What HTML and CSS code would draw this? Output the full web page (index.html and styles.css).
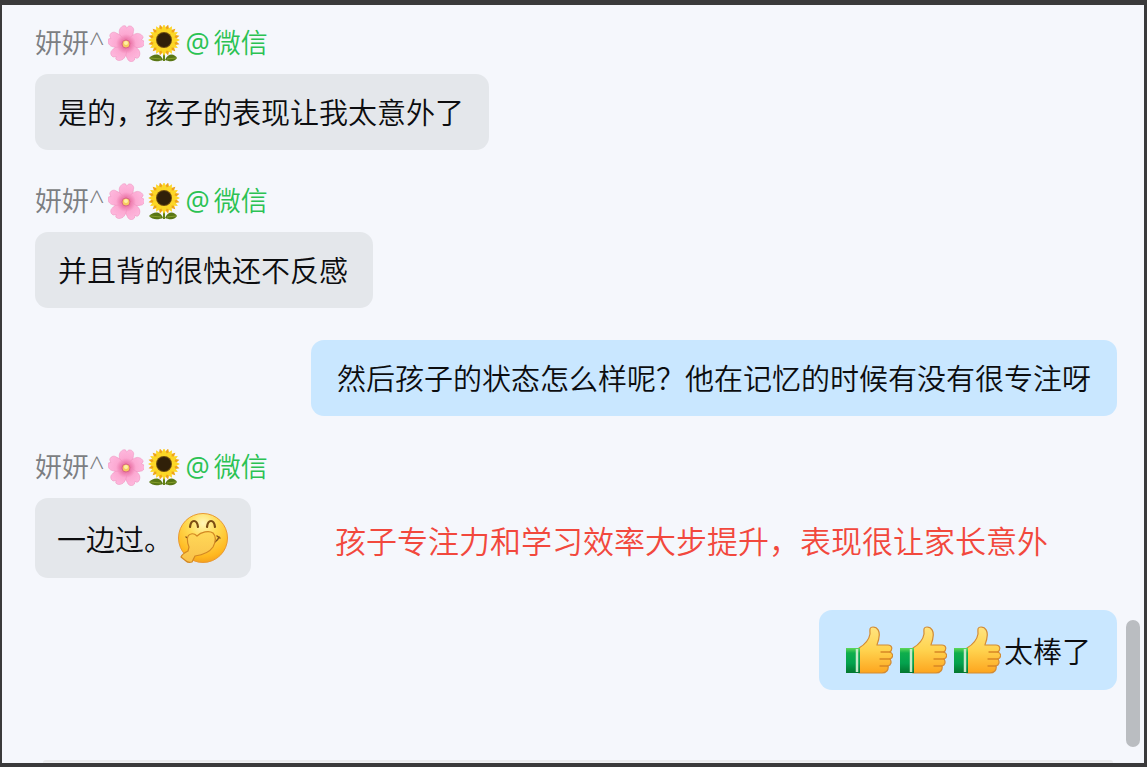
FILE: index.html
```html
<!DOCTYPE html>
<html lang="zh-CN">
<head>
<meta charset="utf-8">
<title>聊天</title>
<link rel="stylesheet" href="styles.css">
</head>
<body>
<svg class="sprites" aria-hidden="true">
  <defs>
    <radialGradient id="pink" gradientUnits="userSpaceOnUse" cx="18" cy="18" r="18">
      <stop offset="0" stop-color="#e0528a"/><stop offset=".25" stop-color="#ee7fb0"/><stop offset=".5" stop-color="#fca9d2"/><stop offset="1" stop-color="#feb9de"/>
    </radialGradient>
    <radialGradient id="face" cx=".5" cy=".2" r=".85">
      <stop offset="0" stop-color="#fff6b6"/><stop offset=".35" stop-color="#ffdc55"/><stop offset=".8" stop-color="#ffb81f"/><stop offset="1" stop-color="#f29a1c"/>
    </radialGradient>
    <linearGradient id="hand" x1="0" y1="0" x2="0" y2="1">
      <stop offset="0" stop-color="#ffe480"/><stop offset=".5" stop-color="#ffd34f"/><stop offset="1" stop-color="#fda51e"/>
    </linearGradient>
    <linearGradient id="palm" x1="0" y1="0" x2="0" y2="1">
      <stop offset="0" stop-color="#ffd858"/><stop offset="1" stop-color="#f9c14a"/>
    </linearGradient>
    <linearGradient id="cuff" x1="0" y1="0" x2="0" y2="1">
      <stop offset="0" stop-color="#5fd85a"/><stop offset=".2" stop-color="#0fae4c"/><stop offset=".6" stop-color="#04a24e"/><stop offset="1" stop-color="#04762f"/>
    </linearGradient>
    <path id="petal" d="M18 19C13 16 10 9 11 5C12 2 15 0 17 1L18 3L20 1C23 0 26 3 25 6C25 11 22 16 18 19Z" fill="url(#pink)" stroke="#ee8dbb" stroke-width=".5"/>
    <path id="ray" d="M16 14L13 5L16 -1L19 5Z"/>
    <g id="rays">
      <use href="#ray"/><use href="#ray" transform="rotate(30 16 15)"/><use href="#ray" transform="rotate(60 16 15)"/>
      <use href="#ray" transform="rotate(90 16 15)"/><use href="#ray" transform="rotate(120 16 15)"/><use href="#ray" transform="rotate(150 16 15)"/>
      <use href="#ray" transform="rotate(180 16 15)"/><use href="#ray" transform="rotate(210 16 15)"/><use href="#ray" transform="rotate(240 16 15)"/>
      <use href="#ray" transform="rotate(270 16 15)"/><use href="#ray" transform="rotate(300 16 15)"/><use href="#ray" transform="rotate(330 16 15)"/>
    </g>
    <symbol id="blossom" viewBox="0 0 36 37">
      <use href="#petal" transform="rotate(2 18 19)"/><use href="#petal" transform="rotate(74 18 19)"/><use href="#petal" transform="rotate(146 18 19)"/>
      <use href="#petal" transform="rotate(218 18 19)"/><use href="#petal" transform="rotate(290 18 19)"/>
      <circle cx="18" cy="19" r="4" fill="#f6ca60" stroke="#d9668a" stroke-width="1"/>
      <circle cx="18" cy="18" r="2" fill="#fff0a5"/>
    </symbol>
    <symbol id="sunflower" viewBox="0 0 32 37" overflow="visible">
      <path d="M16 25V36" stroke="#648316" stroke-width="2"/>
      <path d="M15 35C12 36 5 38 1 33C5 29 12 27 15 35Z" fill="#597614"/>
      <path d="M17 35C20 36 26 38 29 33C26 28 20 28 17 35Z" fill="#597614"/>
      <path d="M2 33L13 34M19 34L28 33" stroke="#8fa831" stroke-width=".8"/>
      <use href="#rays" transform="rotate(15 16 15)" fill="#efa318"/>
      <use href="#rays" fill="#fcd726"/>
      <circle cx="16" cy="15" r="8" fill="#6b4a10"/>
      <circle cx="16" cy="15" r="7" fill="#302009"/>
    </symbol>
    <symbol id="giggle" viewBox="0 0 52 52">
      <circle cx="26" cy="26" r="24.500" fill="url(#face)" stroke="#e99932"/>
      <path d="M13 15C14 7 20 7 21 15M30 15C31 7 37 7 38 15" fill="none" stroke="#7b4d13" stroke-width="2.200" stroke-linecap="round"/>
      <path d="M9 25L12 27M38 30Q41 28 42 25M40 24L43 26" fill="none" stroke="#87541a" stroke-width="1.500" stroke-linecap="round"/>
      <path d="M12 35C10 30 9 23 14 22C17 21 19 23 20 24C24 20 32 18 36 21C40 25 38 31 36 35C32 41 25 43 18 44L15 50Q11 51 9 49L4 45Q5 42 11 39Z" fill="url(#palm)" stroke="#d38823" stroke-width="1.200" stroke-linejoin="round"/>
    </symbol>
    <symbol id="thumb" viewBox="0 0 48 48">
      <path d="M14 22C19 19 24 14 25 8C25 4 24 1 28 1C33 1 35 6 34 11C34 14 32 18 32 19H43C47 19 48 23 45 26C49 28 48 32 45 33C47 36 46 39 43 40C44 44 41 47 37 47H14Z" fill="url(#hand)" stroke="#d28b35" stroke-width="1.200"/>
      <path d="M36 26H45M35 33H45M35 40H43" fill="none" stroke="#d88725" stroke-width="1.300" stroke-linecap="round"/>
      <path d="M1 22H15V47H1Z" fill="url(#cuff)"/>
      <path d="M12 23V46" stroke="#c7e9ca" stroke-width="2.500"/>
    </symbol>
  </defs>
</svg>
<main class="chat">
  <section class="message">
    <header class="sender">
      <span class="sender-name">妍妍^</span>
      <svg class="blossom" role="img" aria-label="樱花"><use href="#blossom"/></svg>
      <svg class="sunflower" role="img" aria-label="向日葵"><use href="#sunflower"/></svg>
      <span class="source"><span class="at">@</span><span>微信</span></span>
    </header>
    <p class="bubble">是的，孩子的表现让我太意外了</p>
  </section>
  <section class="message">
    <header class="sender">
      <span class="sender-name">妍妍^</span>
      <svg class="blossom" role="img" aria-label="樱花"><use href="#blossom"/></svg>
      <svg class="sunflower" role="img" aria-label="向日葵"><use href="#sunflower"/></svg>
      <span class="source"><span class="at">@</span><span>微信</span></span>
    </header>
    <p class="bubble">并且背的很快还不反感</p>
  </section>
  <section class="message own">
    <p class="bubble">然后孩子的状态怎么样呢？他在记忆的时候有没有很专注呀</p>
  </section>
  <section class="message">
    <header class="sender">
      <span class="sender-name">妍妍^</span>
      <svg class="blossom" role="img" aria-label="樱花"><use href="#blossom"/></svg>
      <svg class="sunflower" role="img" aria-label="向日葵"><use href="#sunflower"/></svg>
      <span class="source"><span class="at">@</span><span>微信</span></span>
    </header>
    <div class="annotated">
      <p class="bubble with-emoji">一边过。<svg class="giggle" role="img" aria-label="偷笑"><use href="#giggle"/></svg></p>
      <p class="note">孩子专注力和学习效率大步提升，表现很让家长意外</p>
    </div>
  </section>
  <section class="message own">
    <p class="bubble with-emoji">
      <span class="thumbs">
        <svg class="thumb" role="img" aria-label="赞"><use href="#thumb"/></svg>
        <svg class="thumb" role="img" aria-label="赞"><use href="#thumb"/></svg>
        <svg class="thumb" role="img" aria-label="赞"><use href="#thumb"/></svg>
      </span>太棒了</p>
  </section>
  <div class="composer-edge"></div>
  <div class="scroll-thumb"></div>
</main>
</body>
</html>
```
FILE: styles.css
```css
* {
  box-sizing: border-box;
}

body {
  margin: 0;
  background: #3a3a3b;
  font-family: "Noto Sans CJK SC", "Noto Sans", sans-serif;
  font-weight: 350;
  color: #0c0d0f;
}

p {
  margin: 0;
}

svg {
  display: block;
  flex: none;
}

.sprites {
  position: absolute;
  width: 0;
  height: 0;
}

.chat {
  position: relative;
  display: flex;
  flex-direction: column;
  gap: 32px;
  min-height: 100vh;
  padding: 19px 27px 0 33px;
  border: solid #3a3a3b;
  border-width: 5px 3px 4px 2px;
  background: #f5f7fc;
}

.message {
  display: flex;
  flex-direction: column;
  align-items: flex-start;
  gap: 12px;
}

.own {
  align-items: flex-end;
}

.sender {
  display: flex;
  align-items: center;
  height: 38px;
  font-family: "Open Sans", "Noto Sans CJK SC", sans-serif;
  font-size: 27px;
  line-height: 38px;
  color: #7c7e82;
}

.blossom {
  width: 36px;
  height: 37px;
  margin: 0 4px;
}

.sunflower {
  width: 32px;
  height: 37px;
}

.source {
  display: flex;
  gap: 4px;
  margin-left: 5px;
  color: #2bc253;
}

.at {
  font-weight: 400;
}

.bubble {
  display: flex;
  align-items: center;
  min-height: 76px;
  padding: 15px 25px 17px 23px;
  border-radius: 13px;
  background: #e4e7eb;
  font-size: 29px;
  line-height: 44px;
}

.with-emoji {
  min-height: 80px;
  padding: 14px 22px;
}

.own .bubble {
  padding-right: 26px;
  padding-left: 26px;
  background: #c9e7ff;
}

.giggle {
  width: 52px;
  height: 52px;
  margin-left: 4px;
}

.thumbs {
  display: flex;
  gap: 6px;
  margin-right: 3px;
}

.thumb {
  width: 48px;
  height: 48px;
}

.annotated {
  display: flex;
  align-items: center;
  gap: 84px;
}

.note {
  padding-top: 4px;
  font-size: 31px;
  line-height: 44px;
  color: #f2483d;
}

.composer-edge {
  height: 3px;
  margin: auto 4px 0 8px;
  border-top: 2px solid #e9eaec;
  border-radius: 12px 12px 0 0;
  background: #f0f1f3;
}

.scroll-thumb {
  position: absolute;
  right: 4px;
  bottom: 16px;
  width: 14px;
  height: 127px;
  border-radius: 7px;
  background: #babdc1;
}
```
